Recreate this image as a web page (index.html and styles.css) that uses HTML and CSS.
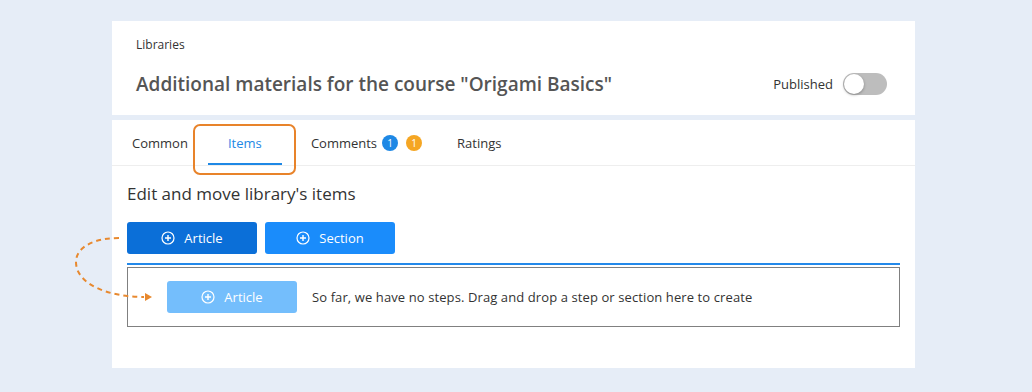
FILE: index.html
```html
<!DOCTYPE html>
<html lang="en">
<head>
    <meta charset="UTF-8">
    <meta name="viewport" content="width=device-width, initial-scale=1.0">
    <title>Library items</title>
    <link rel="stylesheet" href="styles.css">
</head>
<body>
    <div class="page">
        <!-- Header card -->
        <section class="card header-card">
            <p class="crumb">Libraries</p>
            <div class="title-row">
                <h1>Additional materials for the course "Origami Basics"</h1>
                <label class="publish">
                    <span>Published</span>
                    <span class="switch"><span class="knob"></span></span>
                </label>
            </div>
        </section>

        <!-- Main card -->
        <section class="card main-card">
            <nav class="tabs">
                <a class="tab tab-common">Common</a>
                <a class="tab tab-items active">Items</a>
                <a class="tab tab-comments">Comments <span class="badge blue">1</span><span class="badge orange">1</span></a>
                <a class="tab tab-ratings">Ratings</a>
            </nav>

            <div class="content">
                <h2>Edit and move library's items</h2>
                <div class="buttons">
                    <button type="button" class="btn btn-article">
                        <svg class="plus" viewBox="0 0 14 14" width="14" height="14"><circle cx="7" cy="7" r="6" fill="none" stroke="currentColor" stroke-width="1.2"/><path d="M7 4v6M4 7h6" stroke="currentColor" stroke-width="1.4"/></svg>
                        Article
                    </button>
                    <button type="button" class="btn btn-section">
                        <svg class="plus" viewBox="0 0 14 14" width="14" height="14"><circle cx="7" cy="7" r="6" fill="none" stroke="currentColor" stroke-width="1.2"/><path d="M7 4v6M4 7h6" stroke="currentColor" stroke-width="1.4"/></svg>
                        Section
                    </button>
                </div>
                <div class="drop-line"></div>
                <div class="drop-zone">
                    <button type="button" class="btn btn-ghost">
                        <svg class="plus" viewBox="0 0 14 14" width="14" height="14"><circle cx="7" cy="7" r="6" fill="none" stroke="currentColor" stroke-width="1.2"/><path d="M7 4v6M4 7h6" stroke="currentColor" stroke-width="1.4"/></svg>
                        Article
                    </button>
                    <span class="empty-text">So far, we have no steps. Drag and drop a step or section here to create</span>
                </div>
            </div>

            <!-- drag hint arrow -->
            <svg class="drag-arrow" width="90" height="70" viewBox="0 0 90 70">
                <path d="M55 6 C 32 6, 12 14, 12 30 C 12 52, 44 65, 80 65" fill="none" stroke="#e8892f" stroke-width="2" stroke-dasharray="5 4"/>
                <path d="M81 61 L88 65 L81 69 Z" fill="#e8892f"/>
            </svg>
        </section>
    </div>
</body>
</html>
```

FILE: styles.css
```css
body {
    margin: 0;
    padding: 0;
    background-color: #e6edf7;
    font-family: "Open Sans", "Noto Sans", sans-serif;
    color: #333;
}

.page {
    padding: 21px 0 24px 112px;
}

.card {
    width: 803px;
    background: #fff;
}

.header-card {
    box-sizing: border-box;
    height: 94px;
    padding: 15px 28px 0 24px;
}

.crumb {
    margin: 0;
    font-size: 12px;
    line-height: 18px;
}

.title-row {
    display: flex;
    align-items: center;
    justify-content: space-between;
    margin-top: 16px;
}

h1 {
    margin: 0;
    font-size: 19px;
    font-weight: 600;
    color: #555;
    line-height: 28px;
}

.publish {
    display: flex;
    align-items: center;
    gap: 10px;
    font-size: 13px;
}

.switch {
    width: 44px;
    height: 22px;
    border-radius: 11px;
    background: #bdbdbd;
    position: relative;
}

.knob {
    position: absolute;
    left: 1px;
    top: 1px;
    width: 20px;
    height: 20px;
    border-radius: 50%;
    background: #fff;
    box-shadow: 0 1px 3px rgba(0,0,0,0.3);
}

.main-card {
    position: relative;
    margin-top: 5px;
    height: 248px;
}

.tabs {
    display: flex;
    height: 45px;
    border-bottom: 1px solid #eee;
    font-size: 13px;
}

.tab {
    display: flex;
    align-items: center;
    position: relative;
    cursor: pointer;
}

.tab-common {
    padding: 0 20px;
}

.tab-items {
    width: 74px;
    justify-content: center;
    color: #1e88e5;
}

.tab-items::before {
    content: "";
    position: absolute;
    left: -15px;
    right: -14px;
    top: 4px;
    bottom: -10px;
    border: 2px solid #e8832a;
    border-radius: 7px;
}

.tab-items::after {
    content: "";
    position: absolute;
    left: 0;
    right: 0;
    bottom: 0;
    height: 2px;
    background: #1e88e5;
}

.tab-comments {
    margin-left: 29px;
}

.tab-ratings {
    margin-left: 35px;
}

.badge {
    display: inline-flex;
    align-items: center;
    justify-content: center;
    width: 16px;
    height: 16px;
    border-radius: 50%;
    color: #fff;
    font-size: 10px;
    margin-left: 8px;
}

.badge.blue {
    background: #1e88e5;
    margin-left: 5px;
}

.badge.orange {
    background: #f5a623;
}

.content {
    padding: 16px 15px 0 15px;
}

h2 {
    margin: 0;
    font-size: 17px;
    font-weight: 400;
    line-height: 24px;
    color: #333;
}

.buttons {
    display: flex;
    gap: 8px;
    margin-top: 16px;
}

.btn {
    display: flex;
    align-items: center;
    justify-content: center;
    gap: 9px;
    width: 130px;
    height: 32px;
    border: none;
    border-radius: 3px;
    color: #fff;
    font-family: inherit;
    font-size: 13px;
    padding: 0;
}

.btn-article {
    background: #0b6fd8;
}

.btn-section {
    background: #1a8cfb;
}

.btn-ghost {
    background: #74befc;
}

.drop-line {
    height: 2px;
    margin-top: 9px;
    background: #2389ea;
}

.drop-zone {
    box-sizing: border-box;
    height: 60px;
    margin-top: 2px;
    border: 1px solid #808080;
    display: flex;
    align-items: center;
    padding-left: 39px;
    gap: 15px;
    font-size: 13px;
    letter-spacing: 0.1px;
}

.drag-arrow {
    position: absolute;
    left: -48px;
    top: 112px;
}
```
